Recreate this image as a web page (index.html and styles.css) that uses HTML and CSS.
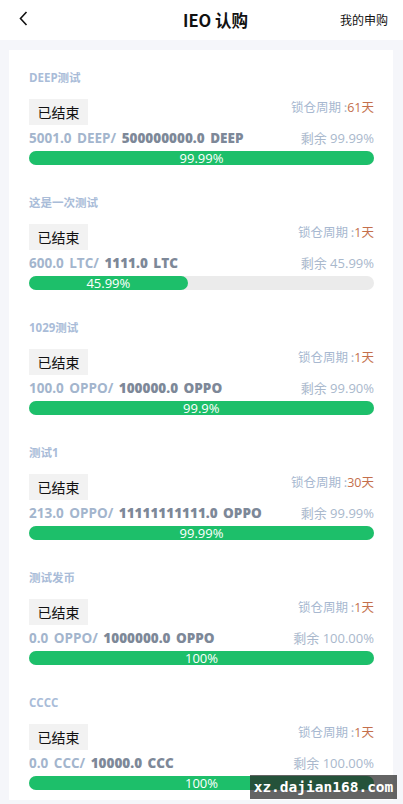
FILE: index.html
```html
<!DOCTYPE html>
<html lang="zh">
<head>
<meta charset="utf-8">
<title>IEO 认购</title>
<link rel="stylesheet" href="styles.css">
</head>
<body>
<header class="topbar">
  <span class="back"><svg width="9" height="15" viewBox="0 0 9 15"><path d="M7.5 1 L1.5 7.5 L7.5 14" fill="none" stroke="#111" stroke-width="1.6"/></svg></span>
  <h1 class="title">IEO 认购</h1>
  <span class="mine">我的申购</span>
</header>
<main class="page">
  <section class="card">
    <div class="item">
      <div class="name">DEEP测试</div>
      <div class="row head">
        <span class="tag">已结束</span>
        <span class="lock">锁仓周期 :<em>61天</em></span>
      </div>
      <div class="row amt">
        <span class="qty"><span class="sold">5001.0 DEEP/</span> <b>500000000.0 DEEP</b></span>
        <span class="rest">剩余 99.99%</span>
      </div>
      <div class="bar"><div class="fill" style="width:99.99%">99.99%</div></div>
    </div>
    <div class="item">
      <div class="name">这是一次测试</div>
      <div class="row head">
        <span class="tag">已结束</span>
        <span class="lock">锁仓周期 :<em>1天</em></span>
      </div>
      <div class="row amt">
        <span class="qty"><span class="sold">600.0 LTC/</span> <b>1111.0 LTC</b></span>
        <span class="rest">剩余 45.99%</span>
      </div>
      <div class="bar"><div class="fill" style="width:45.99%">45.99%</div></div>
    </div>
    <div class="item">
      <div class="name">1029测试</div>
      <div class="row head">
        <span class="tag">已结束</span>
        <span class="lock">锁仓周期 :<em>1天</em></span>
      </div>
      <div class="row amt">
        <span class="qty"><span class="sold">100.0 OPPO/</span> <b>100000.0 OPPO</b></span>
        <span class="rest">剩余 99.90%</span>
      </div>
      <div class="bar"><div class="fill" style="width:99.9%">99.9%</div></div>
    </div>
    <div class="item">
      <div class="name">测试1</div>
      <div class="row head">
        <span class="tag">已结束</span>
        <span class="lock">锁仓周期 :<em>30天</em></span>
      </div>
      <div class="row amt">
        <span class="qty"><span class="sold">213.0 OPPO/</span> <b>11111111111.0 OPPO</b></span>
        <span class="rest">剩余 99.99%</span>
      </div>
      <div class="bar"><div class="fill" style="width:99.99%">99.99%</div></div>
    </div>
    <div class="item">
      <div class="name">测试发币</div>
      <div class="row head">
        <span class="tag">已结束</span>
        <span class="lock">锁仓周期 :<em>1天</em></span>
      </div>
      <div class="row amt">
        <span class="qty"><span class="sold">0.0 OPPO/</span> <b>1000000.0 OPPO</b></span>
        <span class="rest">剩余 100.00%</span>
      </div>
      <div class="bar"><div class="fill" style="width:100%">100%</div></div>
    </div>
    <div class="item">
      <div class="name">CCCC</div>
      <div class="row head">
        <span class="tag">已结束</span>
        <span class="lock">锁仓周期 :<em>1天</em></span>
      </div>
      <div class="row amt">
        <span class="qty"><span class="sold">0.0 CCC/</span> <b>10000.0 CCC</b></span>
        <span class="rest">剩余 100.00%</span>
      </div>
      <div class="bar"><div class="fill" style="width:100%">100%</div></div>
    </div>
  </section>
</main>
<div class="wm">xz.dajian168.com</div>
</body>
</html>
```

FILE: styles.css
```css
* { box-sizing: border-box; }
html, body { margin: 0; padding: 0; }
body {
  width: 403px;
  height: 804px;
  overflow: hidden;
  background: #f5f6fa;
  font-family: "Open Sans", "Noto Sans CJK SC", sans-serif;
  position: relative;
}
.topbar {
  height: 40px;
  background: #fff;
  display: flex;
  align-items: center;
  justify-content: center;
  position: relative;
}
.back {
  position: absolute;
  left: 19px;
  top: 11px;
  line-height: 0;
}
.title {
  margin: 0 0 0 28px;
  font-size: 16.5px;
  font-weight: 700;
  color: #111;
  font-family: "Noto Sans CJK SC", sans-serif;
}
.mine {
  position: absolute;
  right: 15px;
  top: 11px;
  font-size: 12px;
  color: #111;
  font-family: "Noto Sans CJK SC", sans-serif;
}
.page {
  padding: 10px 10px 0 9px;
}
.card {
  background: #fff;
  padding: 0 19px 0 20px;
}
.item {
  padding: 20px 0 10px;
}
.name {
  height: 16px;
  line-height: 16px;
  font-size: 11.5px;
  font-weight: 700;
  color: #a9bcd8;
}
.row {
  display: flex;
  justify-content: space-between;
  align-items: flex-start;
}
.head { margin-top: 13px; }
.tag {
  display: block;
  height: 26px;
  line-height: 26px;
  padding: 0 8.5px;
  background: #f2f2f2;
  color: #111;
  font-size: 14px;
  font-family: "Noto Sans CJK SC", sans-serif;
}
.lock {
  line-height: 16px;
  font-size: 12.5px;
  color: #a7b8d0;
  font-family: "Noto Sans CJK SC", sans-serif;
}
.lock em {
  font-style: normal;
  color: #c46f4c;
  font-family: "Open Sans", "Noto Sans CJK SC", sans-serif;
}
.amt {
  margin-top: 3px;
  height: 20px;
  line-height: 20px;
  align-items: center;
}
.qty {
  font-size: 13.5px;
  font-weight: 700;
  letter-spacing: 0;
  word-spacing: 2px;
}
.sold { color: #a3b5cd; }
.qty b { color: #7d8898; }
.rest {
  font-size: 13px;
  color: #a9b8cc;
  font-family: "Open Sans", "Noto Sans CJK SC", sans-serif;
}
.bar {
  margin-top: 3px;
  height: 14px;
  border-radius: 7px;
  background: #ebebeb;
}
.fill {
  height: 14px;
  border-radius: 7px;
  background: #1dbf6a;
  color: #fff;
  font-size: 13px;
  line-height: 14px;
  text-align: center;
}
.wm {
  position: absolute;
  left: 250px;
  top: 775px;
  width: 147px;
  height: 24px;
  background: rgba(40, 40, 40, 0.72);
  color: #fff;
  font-family: "DejaVu Sans Mono", monospace;
  font-weight: 700;
  font-size: 14.5px;
  line-height: 24px;
  text-align: center;
}
```
